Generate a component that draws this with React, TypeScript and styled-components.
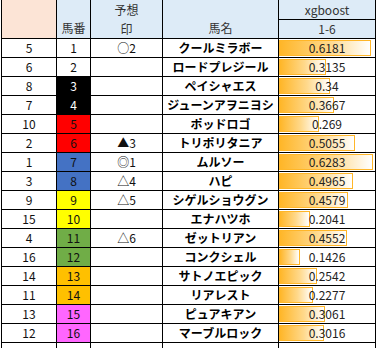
import React from 'react';
import styled, { createGlobalStyle, css } from 'styled-components';

const GlobalStyle = createGlobalStyle`
  html, body {
    margin: 0;
    padding: 0;
    background: #fff;
    overflow: hidden;
  }
  body {
    font-family: 'Noto Sans CJK JP', 'Noto Sans', sans-serif;
    color: #111;
  }
`;

type Row = {
  rank: number;
  no: number;
  mark: string;
  name: string;
  score: number;
};

const rows: Row[] = [
  { rank: 5, no: 1, mark: '○2', name: 'クールミラボー', score: 0.6181 },
  { rank: 6, no: 2, mark: '', name: 'ロードプレジール', score: 0.3135 },
  { rank: 8, no: 3, mark: '', name: 'ペイシャエス', score: 0.34 },
  { rank: 7, no: 4, mark: '', name: 'ジューンアヲニヨシ', score: 0.3667 },
  { rank: 10, no: 5, mark: '', name: 'ポッドロゴ', score: 0.269 },
  { rank: 2, no: 6, mark: '▲3', name: 'トリポリタニア', score: 0.5055 },
  { rank: 1, no: 7, mark: '◎1', name: 'ムルソー', score: 0.6283 },
  { rank: 3, no: 8, mark: '△4', name: 'ハピ', score: 0.4965 },
  { rank: 9, no: 9, mark: '△5', name: 'シゲルショウグン', score: 0.4579 },
  { rank: 15, no: 10, mark: '', name: 'エナハツホ', score: 0.2041 },
  { rank: 4, no: 11, mark: '△6', name: 'ゼットリアン', score: 0.4552 },
  { rank: 16, no: 12, mark: '', name: 'コンクシェル', score: 0.1426 },
  { rank: 14, no: 13, mark: '', name: 'サトノエピック', score: 0.2542 },
  { rank: 11, no: 14, mark: '', name: 'リアレスト', score: 0.2277 },
  { rank: 13, no: 15, mark: '', name: 'ピュアキアン', score: 0.3061 },
  { rank: 12, no: 16, mark: '', name: 'マーブルロック', score: 0.3016 },
];

// 枠色 (frame colours), two horses per frame
const frameColors = [
  { bg: '#ffffff', fg: '#111' },
  { bg: '#000000', fg: '#fff' },
  { bg: '#ff0000', fg: '#111' },
  { bg: '#4472c4', fg: '#111' },
  { bg: '#ffff00', fg: '#111' },
  { bg: '#70ad47', fg: '#111' },
  { bg: '#ffc000', fg: '#111' },
  { bg: '#ff66ff', fg: '#111' },
];

const maxScore = Math.max(...rows.map(r => r.score));
const BAR_MAX = 94;

export default function App() {
  return (
    <>
      <GlobalStyle />
      <Sheet>
        <HeaderCell $bg='#fce4d6' $span={2} />
        <HeaderCell $bg='#ddebf7' $span={2} $variant='bottom'>
          馬番
        </HeaderCell>
        <HeaderCell $bg='#ddebf7' $span={2} $variant='stack'>
          <span>予想</span>
          <span>印</span>
        </HeaderCell>
        <HeaderCell $bg='#ddebf7' $span={2} $variant='bottom'>
          馬名
        </HeaderCell>
        <HeaderCell $bg='#ddebf7'>xgboost</HeaderCell>
        <HeaderCell $bg='#ddebf7'>1-6</HeaderCell>

        {rows.map(r => {
          const frame = frameColors[Math.floor((r.no - 1) / 2)];
          return (
            <React.Fragment key={r.no}>
              <Cell>{r.rank}</Cell>
              <Cell $bg={frame.bg} $fg={frame.fg}>
                {r.no}
              </Cell>
              <Cell>{r.mark}</Cell>
              <NameCell>{r.name}</NameCell>
              <BarCell>
                <Bar style={{ width: (r.score / maxScore) * BAR_MAX }} />
                <Value>{r.score}</Value>
              </BarCell>
            </React.Fragment>
          );
        })}

        <Cell />
        <Cell />
        <Cell />
        <Cell />
        <Cell />
      </Sheet>
    </>
  );
}

const Sheet = styled.div`
  display: grid;
  grid-template-columns: 54px 33px 71px 115px 96px;
  grid-template-rows: 19px repeat(18, 18px);
  gap: 1px;
  width: 375px;
  margin-left: 1px;
  padding: 0 1px;
  box-sizing: border-box;
  background: #000;
`;

const HeaderCell = styled.div<{
  $bg: string;
  $span?: number;
  $variant?: 'center' | 'bottom' | 'stack';
}>`
  grid-row: ${p => (p.$span ? `span ${p.$span}` : 'auto')};
  background: ${p => p.$bg};
  display: flex;
  align-items: center;
  justify-content: center;
  font-size: 12px;
  line-height: 18px;
  color: #333;
  box-sizing: border-box;

  ${p =>
    p.$variant === 'bottom' &&
    css`
      align-items: flex-end;
      padding-bottom: 1px;
    `}

  ${p =>
    p.$variant === 'stack' &&
    css`
      flex-direction: column;
      justify-content: space-around;
    `}
`;

const Cell = styled.div<{ $bg?: string; $fg?: string }>`
  background: ${p => p.$bg || '#fff'};
  color: ${p => p.$fg || '#111'};
  display: flex;
  align-items: center;
  justify-content: center;
  font-size: 12px;
  line-height: 18px;
`;

const NameCell = styled(Cell)`
  font-weight: 700;
  color: #000;
`;

const BarCell = styled.div`
  position: relative;
  background: #fff;
  display: flex;
  align-items: center;
  justify-content: center;
`;

const Bar = styled.div`
  position: absolute;
  left: 0;
  top: 1px;
  height: 16px;
  box-sizing: border-box;
  border: 1px solid #ffb628;
  background: linear-gradient(to right, #ffb628 0%, #ffd98c 55%, #ffffff 100%);
`;

const Value = styled.span`
  position: relative;
  font-size: 12px;
  line-height: 18px;
  color: #222;
`;
